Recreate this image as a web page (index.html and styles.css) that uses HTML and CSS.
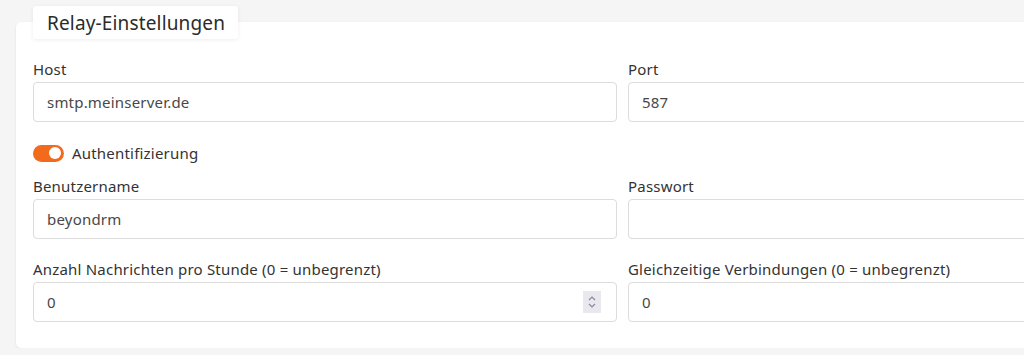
FILE: index.html
```html
<!DOCTYPE html>
<html lang="de">
<head>
<meta charset="utf-8">
<title>Relay-Einstellungen</title>
<link rel="stylesheet" href="styles.css">
</head>
<body>
<div class="page">
  <section class="card">
    <div class="legend">Relay-Einstellungen</div>
    <div class="grid">
      <div class="field">
        <label class="label">Host</label>
        <div class="input">smtp.meinserver.de</div>
      </div>
      <div class="field">
        <label class="label">Port</label>
        <div class="input">587</div>
      </div>
    </div>
    <div class="toggle-row">
      <span class="toggle"><span class="knob"></span></span>
      <span class="toggle-label">Authentifizierung</span>
    </div>
    <div class="grid">
      <div class="field">
        <label class="label">Benutzername</label>
        <div class="input">beyondrm</div>
      </div>
      <div class="field">
        <label class="label">Passwort</label>
        <div class="input"></div>
      </div>
    </div>
    <div class="grid grid-last">
      <div class="field">
        <label class="label">Anzahl Nachrichten pro Stunde (0 = unbegrenzt)</label>
        <div class="input input-number">0
          <span class="spin">
            <svg width="10" height="16" viewBox="0 0 10 16"><path d="M2 6 L5 3 L8 6 M2 10 L5 13 L8 10" fill="none" stroke="#8a8a99" stroke-width="1.2"/></svg>
          </span>
        </div>
      </div>
      <div class="field">
        <label class="label">Gleichzeitige Verbindungen (0 = unbegrenzt)</label>
        <div class="input">0</div>
      </div>
    </div>
  </section>
</div>
</body>
</html>
```
FILE: styles.css
```css
html, body {
  margin: 0;
  padding: 0;
  background: #f5f5f5;
  overflow: hidden;
}
body {
  font-family: "Noto Sans", "Open Sans", sans-serif;
  color: #333;
  width: 1024px;
  height: 355px;
}
.page {
  padding: 22px 0 0 16px;
  width: 1008px;
  overflow: hidden;
}
.card {
  position: relative;
  background: #fff;
  border-radius: 5px 0 0 5px;
  box-shadow: 0 1px 3px rgba(0,0,0,0.08);
  padding: 37px 0 26px 17px;
  box-sizing: border-box;
}
.legend {
  position: absolute;
  left: 17px;
  top: -16px;
  background: #fff;
  padding: 0 13px 0 14px;
  height: 33px;
  line-height: 34px;
  font-size: 19px;
  letter-spacing: 0.15px;
  color: #2b2b2b;
  border-radius: 3px;
  box-shadow: 0 1px 4px rgba(0,0,0,0.07);
}
.grid {
  display: grid;
  grid-template-columns: 584px 584px;
  column-gap: 11px;
}
.field {
  display: flex;
  flex-direction: column;
}
.label {
  font-size: 15px;
  line-height: 20px;
  letter-spacing: 0.2px;
  color: #333;
  height: 23px;
}
.input {
  position: relative;
  box-sizing: border-box;
  height: 40px;
  border: 1px solid #dcdcdc;
  border-radius: 4px;
  padding: 0 13px;
  font-size: 15px;
  letter-spacing: 0.2px;
  line-height: 38px;
  color: #484848;
  background: #fff;
}
.spin {
  position: absolute;
  right: 15px;
  top: 8px;
  width: 18px;
  height: 22px;
  background: #e8e8ee;
  display: flex;
  align-items: center;
  justify-content: center;
}
.spin svg { display: block; }
.toggle-row {
  display: flex;
  align-items: center;
  gap: 8px;
  margin: 21px 0 13px 0;
  height: 20px;
}
.toggle {
  position: relative;
  width: 31px;
  height: 17px;
  background: #f26b1d;
  border-radius: 9px;
  display: inline-block;
}
.knob {
  position: absolute;
  right: 3px;
  top: 2.5px;
  width: 12px;
  height: 12px;
  background: #fff;
  border-radius: 50%;
}
.toggle-label {
  font-size: 15px;
  letter-spacing: 0.2px;
  color: #333;
}
.grid-last {
  margin-top: 20px;
}
```
